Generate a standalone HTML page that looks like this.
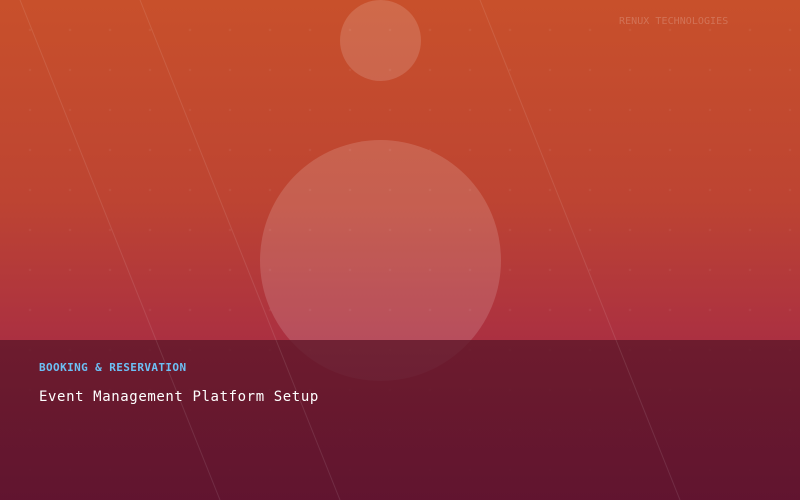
<!DOCTYPE html>
<html><head><style>
html,body{margin:0;padding:0}
body{width:800px;height:500px;position:relative;overflow:hidden;background:linear-gradient(180deg,#c8502b 0%,#bd4432 40%,#ab3041 68%,#a02b45 100%);font-family:"DejaVu Sans Mono","Liberation Mono",monospace}
.dots{position:absolute;inset:0;background-image:radial-gradient(circle,rgba(255,255,255,0.05) 1px,transparent 1.5px);background-size:40px 40px;background-position:10px 10px}
.c{position:absolute;border-radius:50%;background:rgba(255,255,255,0.15)}
.band{position:absolute;left:0;top:340px;width:800px;height:160px;background:linear-gradient(180deg,rgba(92,22,40,0.78),rgba(90,18,45,0.9))}
svg{position:absolute;left:0;top:0}
.brand{position:absolute;left:619px;top:16px;font-size:10px;color:rgba(255,255,255,0.2);letter-spacing:0.05px}
.cat{position:absolute;left:39px;top:361px;font-size:11px;font-weight:bold;color:#6cc0f5;letter-spacing:0.4px}
.title{position:absolute;left:39px;top:389px;font-size:14px;color:#fff;letter-spacing:0.6px}
</style></head><body>
<div class="dots"></div>
<div class="c" style="left:340px;top:0;width:81px;height:81px"></div>
<div class="c" style="left:260px;top:140px;width:241px;height:241px"></div>
<div class="band"></div>
<svg width="800" height="500"><g stroke="rgba(255,255,255,0.1)" stroke-width="1"><line x1="20" y1="0" x2="220" y2="500"/><line x1="140" y1="0" x2="340" y2="500"/><line x1="480" y1="0" x2="680" y2="500"/></g></svg>
<div class="brand">RENUX TECHNOLOGIES</div>
<div class="cat">BOOKING &amp; RESERVATION</div>
<div class="title">Event Management Platform Setup</div>
</body></html>
